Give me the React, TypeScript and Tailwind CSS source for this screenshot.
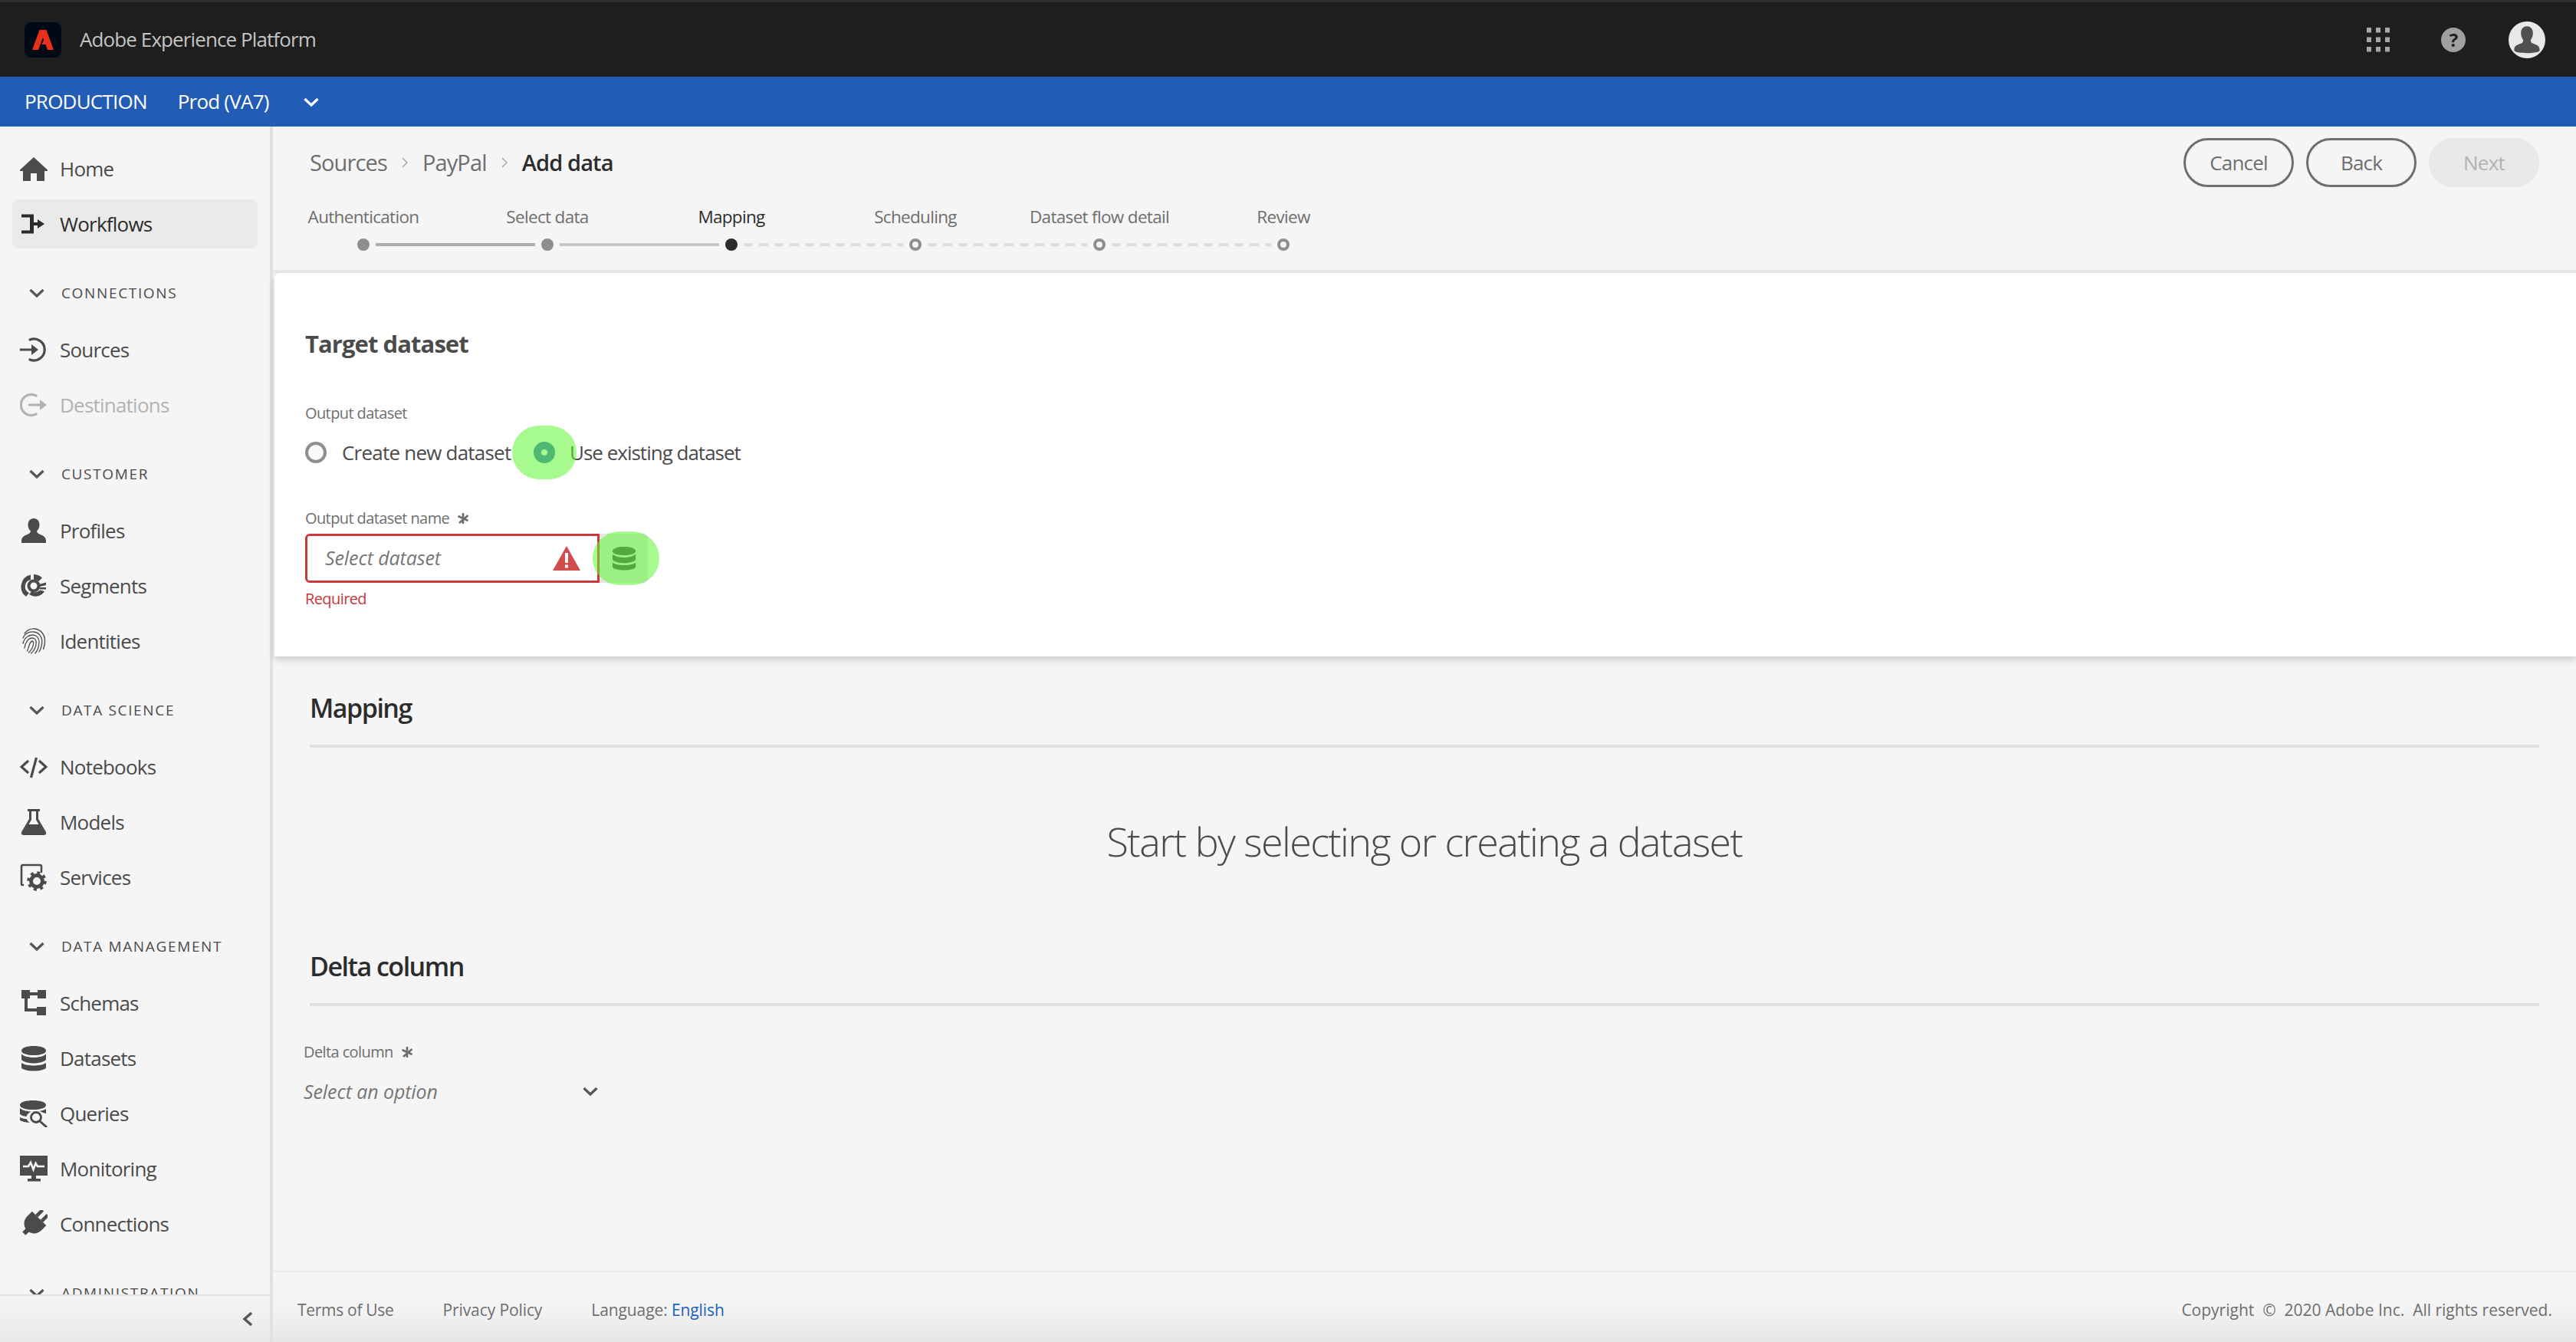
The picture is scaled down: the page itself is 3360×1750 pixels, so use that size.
import React from "react";

type IP = { className?: string };
const Svg = ({ children, className = "w-9 h-9" }: { children: React.ReactNode; className?: string }) => (
  <svg viewBox="0 0 36 36" fill="currentColor" className={className + " shrink-0"}>{children}</svg>
);

const Home = () => <Svg><path d="M18 3 L36 19.500 Q36.500 21 35 21 H32 V34 H22 V24 H14 V34 H4 V21 H1 Q-.5 21 0 19.500 Z" /></Svg>;
const Workflows = () => <Svg><path d="M2 5.500 H18 V16 H23 V12 L32 18 L23 24 V20 H18 V30.500 H2 V26.500 H13 V9.500 H2 Z" /></Svg>;
const SourcesI = () => (
  <Svg>
    <path d="M13 5 A14 14 0 1 1 13 31" fill="none" stroke="currentColor" strokeWidth="3.200" strokeLinecap="round" />
    <path d="M0 16.500 H15 V11 L24 18 L15 25 V19.500 H0 Z" />
  </Svg>
);
const DestI = () => (
  <Svg>
    <path d="M21 6 A13.500 13.500 0 1 0 21 30" fill="none" stroke="currentColor" strokeWidth="3.200" strokeLinecap="round" />
    <path d="M11 16.500 H26 V11 L35 18 L26 25 V19.500 H11 Z" />
  </Svg>
);
const Profile = () => <Svg><path d="M18 2 C23 2 25.500 6 25.500 10.500 C25.500 14.500 23.500 17 22 18.500 C22 21 24 22 27 23.200 C31 24.800 34 26.500 34 32 V34 H2 V32 C2 26.500 5 24.800 9 23.200 C12 22 14 21 14 18.500 C12.500 17 10.500 14.500 10.500 10.500 C10.500 6 13 2 18 2 Z" /></Svg>;
const Segments = () => (
  <Svg>
    <path d="M14 3.500 L14 10 A9 9 0 0 0 12 27 L8 32 A16 16 0 0 1 14 3.500 Z" />
    <path d="M18 3 C22 3 26 4.500 29 7.500 L24.500 12 C23 10.800 21 10 18 9.800 Z" />
    <path d="M12 29 C18 33 27 33 32 25 L26 23.500 C23 26.500 18 27 15 25.500 Z" />
    <circle cx="18" cy="18" r="6.500" fill="none" stroke="currentColor" strokeWidth="4" />
    <path d="M25 16 L34 13.500 V17 L26 19 Z" />
    <path d="M26 20 H34 V22.500 H26 Z" />
  </Svg>
);
const Finger = () => (
  <Svg>
    <g fill="none" stroke="currentColor" strokeWidth="1.300" strokeLinecap="round">
      <path d="M6 8 C10 3 15 1.500 19.500 2 C27 3 32 9 32.500 16 C32.800 21 32 25 30.500 28.500" />
      <path d="M4 14 C6.500 8.500 12 5.500 18 6 C24.500 6.500 28.500 12 28.800 17 C29 23 27.500 28 25 32" />
      <path d="M4 21 C5.500 14 11 10 16.500 10 C21.500 10 25 14 25 19 C25 25 23 30 20 34" />
      <path d="M6 27 C7 19.500 11 14 16 14 C19.500 14 21.200 17 21.200 20 C21.200 25.500 18.500 30.500 14.500 34" />
      <path d="M9.500 31 C12 26 12 19 16 18 C17.500 18 17.800 20 17.500 22 C17 26 14.500 30 11.500 33" />
    </g>
  </Svg>
);
const Code = () => (
  <Svg>
    <g fill="none" stroke="currentColor" strokeWidth="3.200">
      <path d="M11 10 L2 18 L11 26" />
      <path d="M25 10 L34 18 L25 26" />
      <path d="M21.500 6 L14.500 32" />
    </g>
  </Svg>
);
const Flask = () => (
  <Svg>
    <path d="M10 1 H26 V4 H24 V14 L34 31 Q35 35 31 35 H5 Q1 35 2 31 L12 14 V4 H10 Z M15 4 V15 L11.500 21 H24.500 L21 15 V4 Z" fillRule="evenodd" />
  </Svg>
);
const Services = () => (
  <Svg>
    <path d="M4 28 H2.500 Q2 28 2 27 V4 Q2 2 4 2 H26 Q28 2 28 4 V11" fill="none" stroke="currentColor" strokeWidth="2.600" strokeLinecap="round" />
    <circle cx="22" cy="23" r="7.500" fill="none" stroke="currentColor" strokeWidth="5" />
    <circle cx="22" cy="23" r="11" fill="none" stroke="currentColor" strokeWidth="3.500" strokeDasharray="4 4.640" />
  </Svg>
);
const Schemas = () => (
  <Svg>
    <path d="M2 1 H13 V4 H23 V1 H34 V12 H23 V8 H13 V12 H10 V25 H22 V23 H34 V34 H22 V29 H6 V12 H2 Z" />
  </Svg>
);
const Db = ({ className }: IP) => (
  <Svg className={className}>
    <path d="M2 8 C2 4 10 2 18 2 C26 2 34 4 34 8 C34 12 26 14 18 14 C10 14 2 12 2 8 Z" />
    <path d="M2 12.500 C5 15.500 12 17 18 17 C24 17 31 15.500 34 12.500 V20 C31 23 24 24.500 18 24.500 C12 24.500 5 23 2 20 Z" />
    <path d="M2 24 C5 26.500 12 27.500 18 27.500 C24 27.500 31 26.500 34 24 V30 C34 32.500 26 34.500 18 34.500 C10 34.500 2 32.500 2 30 Z" />
  </Svg>
);
const Queries = () => (
  <Svg>
    <path d="M0 7 C0 3 8 1 17 1 C26 1 34 3 34 7 C34 11 26 13 17 13 C8 13 0 11 0 7 Z" />
    <path d="M0 11 C3 14 10 15.500 15 15.500 C11 17 9 20 8.500 22 C5 21.500 2 20.500 0 19 Z" />
    <path d="M0 23 C3 24.500 6 25 9 25.500 C10 27.500 11 29 13 30 C6 29.500 0 28 0 26 Z" />
    <path d="M25 15 C28 14.500 32 13.500 34 12 V18 C32 18 28 15.500 25 15 Z" />
    <circle cx="21" cy="23" r="6.500" fill="none" stroke="currentColor" strokeWidth="2.800" />
    <path d="M26 28 L35 36" stroke="currentColor" strokeWidth="3" />
  </Svg>
);
const Monitor = () => (
  <Svg>
    <path d="M0 1 H36 V27 H21 V31 H27 V34.500 H10 V31 H15 V27 H0 Z" />
    <path d="M4 15 H11 L14 10 L17.500 19 L20.500 11 L23 15 H32" fill="none" stroke="#f5f5f5" strokeWidth="2.600" />
  </Svg>
);
const Plug = () => (
  <Svg>
    <g transform="rotate(45 18 18)">
      <rect x="11" y="-3" width="4.500" height="11" />
      <rect x="20.500" y="-3" width="4.500" height="11" />
      <path d="M5 8 H31 V17 C31 25 25 29 21 30 V36 H15 V30 C11 29 5 25 5 17 Z" />
    </g>
  </Svg>
);

const Chevron = ({ className = "w-[20px] h-[14px] text-[#565656]" }: IP) => (
  <svg viewBox="0 0 20 14" fill="none" stroke="currentColor" strokeWidth="3.200" className={className + " shrink-0"}>
    <path d="M1.500 3 L10 11 L18.500 3" />
  </svg>
);

const Row = ({ icon, label, active, dim }: { icon: React.ReactNode; label: string; active?: boolean; dim?: boolean }) => (
  <div className={"ml-4 mb-2 w-[320px] h-16 shrink-0 flex items-center gap-4 pl-[10px] rounded-lg text-[26px] " + (active ? "bg-[#eaeaea] text-[#2c2c2c]" : dim ? "text-[#b3b3b3]" : "text-[#4b4b4b]")}>
    {icon}
    <span>{label}</span>
  </div>
);

const Head = ({ label }: { label: string }) => (
  <div className="h-[92px] shrink-0 pt-8">
    <div className="h-9 flex items-center pl-[38px] gap-[22px]">
      <Chevron />
      <span className="text-[19px] !tracking-[1.650px] text-[#4b4b4b]">{label}</span>
    </div>
  </div>
);

const Sidebar = () => (
  <aside className="w-[356px] shrink-0 flex flex-col bg-[#f5f5f5] border-r-4 border-[#e1e1e1] overflow-hidden">
    <nav className="flex-1 overflow-hidden pt-[23px] flex flex-col">
      <Row icon={<Home />} label="Home" />
      <Row icon={<Workflows />} label="Workflows" active />
      <Head label="CONNECTIONS" />
      <Row icon={<SourcesI />} label="Sources" />
      <Row icon={<DestI />} label="Destinations" dim />
      <Head label="CUSTOMER" />
      <Row icon={<Profile />} label="Profiles" />
      <Row icon={<Segments />} label="Segments" />
      <Row icon={<Finger />} label="Identities" />
      <Head label="DATA SCIENCE" />
      <Row icon={<Code />} label="Notebooks" />
      <Row icon={<Flask />} label="Models" />
      <Row icon={<Services />} label="Services" />
      <Head label="DATA MANAGEMENT" />
      <Row icon={<Schemas />} label="Schemas" />
      <Row icon={<Db />} label="Datasets" />
      <Row icon={<Queries />} label="Queries" />
      <Row icon={<Monitor />} label="Monitoring" />
      <Row icon={<Plug />} label="Connections" />
      <Head label="ADMINISTRATION" />
    </nav>
    <div className="h-[62px] shrink-0 border-t-2 border-[#e1e1e1] flex items-center justify-end pr-[22px] bg-gradient-to-b from-[#f5f5f5] to-[#e9e9e9]">
      <svg viewBox="0 0 14 20" fill="none" stroke="#565656" strokeWidth="3.400" className="w-[14px] h-5">
        <path d="M12 2 L3 10 L12 18" />
      </svg>
    </div>
  </aside>
);

const Bc = () => (
  <svg viewBox="0 0 8 14" fill="none" stroke="#a8a8a8" strokeWidth="1.500" className="w-2 h-[14px] mx-[19px]">
    <path d="M1 1 L7 7 L1 13" />
  </svg>
);

const steps = ["Authentication", "Select data", "Mapping", "Scheduling", "Dataset flow detail", "Review"];
const dash = "w-[208px] h-1 mx-2 bg-[repeating-linear-gradient(90deg,#dedede_0,#dedede_12px,transparent_12px,transparent_20px)]";

const Stepper = () => (
  <div className="-ml-[50px]">
    <div className="flex">
      {steps.map((s) => (
        <div key={s} className={"w-[240px] text-center text-[22.500px] leading-[28px] " + (s === "Mapping" ? "text-[#2c2c2c]" : "text-[#6e6e6e]")}>{s}</div>
      ))}
    </div>
    <div className="flex items-center mt-[14px] ml-[112px]">
      <div className="w-4 h-4 rounded-full bg-[#8e8e8e]" />
      <div className="w-[208px] h-1 mx-2 bg-[#adadad]" />
      <div className="w-4 h-4 rounded-full bg-[#8e8e8e]" />
      <div className="w-[208px] h-1 mx-2 bg-[#c6c6c6]" />
      <div className="w-4 h-4 rounded-full bg-[#2c2c2c]" />
      <div className={dash} />
      <div className="w-4 h-4 rounded-full border-[4px] border-[#8e8e8e]" />
      <div className={dash} />
      <div className="w-4 h-4 rounded-full border-[4px] border-[#8e8e8e]" />
      <div className={dash} />
      <div className="w-4 h-4 rounded-full border-[4px] border-[#8e8e8e]" />
    </div>
  </div>
);

const Asterisk = ({ className = "" }: IP) => (
  <svg viewBox="0 0 16 16" fill="none" stroke="#6e6e6e" strokeWidth="2.600" className={"w-4 h-4 " + className}>
    <path d="M8 1 V15 M1.500 5 L14.500 11 M14.500 4 L3 14" />
  </svg>
);

const Card = () => (
  <section className="ml-[2px] h-[500px] shrink-0 bg-white rounded-tl-lg shadow-[0_4px_10px_rgba(0,0,0,0.18)] pl-[40px] pt-[71px] relative">
    <h2 className="text-[31px] leading-[42px] font-bold text-[#4b4b4b]">Target dataset</h2>
    <div className="mt-[57px] text-[20px] leading-[26px] text-[#6e6e6e]">Output dataset</div>
    <div className="mt-[21px] flex items-center text-[26px] leading-[34px] text-[#4b4b4b]">
      <span className="w-7 h-7 rounded-full border-[4px] border-[#8e8e8e] bg-[#fafafa]" />
      <span className="ml-[20px] w-[250px]">Create new dataset</span>
      <span className="relative w-7 h-7 rounded-full border-[10px] border-[#3a6fc0] bg-white">
        <span className="absolute -left-[38px] -top-[31px] w-[84px] h-[70px] rounded-full bg-[rgba(95,245,50,0.55)]" />
      </span>
      <span className="ml-[19px] !tracking-[-1px]">Use existing dataset</span>
    </div>
    <div className="mt-[56px] flex items-center gap-[10px] text-[20px] leading-[26px] text-[#6e6e6e]">
      <span>Output dataset name</span>
      <Asterisk />
    </div>
    <div className="mt-[7px] flex items-stretch h-[64px]">
      <div className="w-[384px] border-[3px] border-[#c93a3a] rounded-l-md bg-white flex items-center justify-between pl-[23px] pr-[22px]">
        <span className="text-[25px] italic !tracking-[-0.1px] text-[#767676]">Select dataset</span>
        <svg viewBox="0 0 36 32" className="w-9 h-8">
          <path d="M18 0 L36 32 H0 Z" fill="#d24c4c" />
          <rect x="16" y="9" width="4" height="13" fill="#fff" />
          <rect x="16" y="24.500" width="4" height="4" fill="#fff" />
        </svg>
      </div>
      <div className="relative w-[63px] bg-[#e6e6e6] rounded-r-md flex items-center justify-center text-[#4a4a4a]">
        <Db className="w-[34px] h-[34px]" />
        <span className="absolute -left-[9px] -top-[3px] w-[87px] h-[70px] rounded-full bg-[rgba(95,245,50,0.55)]" />
      </div>
    </div>
    <div className="mt-[8px] text-[20px] leading-[26px] text-[#c9373a]">Required</div>
  </section>
);

const Body = () => (
  <div className="flex-1 overflow-hidden px-12">
    <h2 className="mt-[45px] text-[34px] leading-[44px] font-semibold !tracking-[-1.500px] text-[#2c2c2c]">Mapping</h2>
    <div className="mt-[26px] h-1 bg-[#e1e1e1]" />
    <div className="mt-[86px] text-center text-[52px] leading-[72px] font-light text-[#4b4b4b]">Start by selecting or creating a dataset</div>
    <h2 className="mt-[105px] text-[34px] leading-[44px] font-semibold !tracking-[-1.500px] text-[#2c2c2c]">Delta column</h2>
    <div className="mt-[26px] h-1 bg-[#e1e1e1]" />
    <div className="-ml-2 mt-[47px] flex items-center gap-[10px] text-[20px] leading-[26px] text-[#6e6e6e]">
      <span>Delta column</span>
      <Asterisk />
    </div>
    <div className="-ml-2 mt-[21px] w-[388px] flex items-center justify-between">
      <span className="text-[25px] leading-[34px] italic !tracking-[-0.1px] text-[#767676]">Select an option</span>
      <Chevron className="w-[20px] h-[14px] text-[#565656] mr-[4px]" />
    </div>
  </div>
);

const Footer = () => (
  <footer className="h-[93px] shrink-0 border-t-2 border-[#ececec] flex items-center justify-between pl-8 pr-[31px] pt-2 text-[21px] text-[#6e6e6e] bg-gradient-to-b from-[#f5f5f5] via-[#f4f4f4] to-[#e6e6e6]">
    <div className="flex gap-[64px]">
      <span className="!tracking-[-0.3px]">Terms of Use</span>
      <span className="!tracking-[-0.1px]">Privacy Policy</span>
      <span className="!tracking-[-0.1px]">Language: <span className="text-[#1b5fc1] !tracking-[-0.1px]">English</span></span>
    </div>
    <span className="!tracking-normal">Copyright &nbsp;©&nbsp; 2020 Adobe Inc. &nbsp;All rights reserved.</span>
  </footer>
);

const Btn = ({ children, dis }: { children: string; dis?: boolean }) => (
  <div className={"w-[144px] h-[64px] rounded-full flex items-center justify-center text-[26px] font-medium " + (dis ? "bg-[#e9e9e9] text-[#b3b3b3]" : "border-[3px] border-[#6e6e6e] text-[#6e6e6e]")}>{children}</div>
);

export default function App() {
  return (
    <div className="w-[3360px] h-[1750px] flex flex-col overflow-hidden bg-[#f5f5f5] font-['Open_Sans',sans-serif] [&_*]:tracking-[-0.03em]">
      <header className="h-[100px] shrink-0 bg-[#1e1e1e] border-t-[3px] border-[#2d2d33] flex items-center pl-8 pr-[40px]">
        <div className="w-12 h-[46px] rounded-lg bg-[#000a17] flex items-center justify-center">
          <svg viewBox="0 0 28 26" className="w-7 h-[26px]">
            <path d="M9.500 0 H18.500 L28 26 H20 L17.500 19 H12.500 L15 13 L14 10 L8 26 H0 Z" fill="#e8301c" />
          </svg>
        </div>
        <span className="ml-6 text-[26px] text-[#c4c4c4] !tracking-[-0.9px]">Adobe Experience Platform</span>
        <div className="ml-auto flex items-center">
          <svg viewBox="0 0 30 32" className="w-[30px] h-8" fill="#a6a6a6">
            {[0, 12, 24].map((x) => [0, 12.500, 25].map((y) => <rect key={x + "-" + y} x={x} y={y} width="6" height="6.500" />))}
          </svg>
          <div className="ml-[67px] w-8 h-8 rounded-full bg-[#a0a0a0] flex items-center justify-center text-[24px] font-bold text-[#1e1e1e]">?</div>
          <div className="ml-[56px] w-12 h-12 rounded-full bg-[#e8e8e8] flex items-center justify-center text-[#505050]">
            <svg viewBox="0 0 36 36" fill="currentColor" className="w-10 h-10">
              <path d="M18 2 C23 2 25 6 25 10 C25 13.500 24 16 22.500 18 C22 21 24 22 27 23 C31 24.500 33 26 33 30 C33 33 24 33.500 18 33.500 C12 33.500 3 33 3 30 C3 26 5 24.500 9 23 C12 22 14 21 13.500 18 C12 16 11 13.500 11 10 C11 6 13 2 18 2 Z" />
            </svg>
          </div>
        </div>
      </header>
      <div className="h-[65px] shrink-0 bg-[#225cb5] flex items-center pl-8 text-white text-[26px]">
        <span>PRODUCTION</span>
        <span className="ml-10">Prod (VA7)</span>
        <Chevron className="ml-[45px] w-[20px] h-[14px] text-white" />
      </div>
      <div className="flex-1 flex min-h-0">
        <Sidebar />
        <main className="flex-1 min-w-0 flex flex-col">
          <div className="h-[191px] shrink-0 border-b-4 border-[#e9e9e9] pl-12 pr-12 pt-[15px] flex flex-col">
            <div className="flex items-center justify-between">
              <div className="flex items-center text-[29px] text-[#6e6e6e]">
                <span>Sources</span><Bc /><span>PayPal</span><Bc />
                <span className="font-semibold text-[#2c2c2c]">Add data</span>
              </div>
              <div className="flex gap-4">
                <Btn>Cancel</Btn>
                <Btn>Back</Btn>
                <Btn dis>Next</Btn>
              </div>
            </div>
            <div className="mt-[25px]"><Stepper /></div>
          </div>
          <Card />
          <Body />
          <Footer />
        </main>
      </div>
    </div>
  );
}
